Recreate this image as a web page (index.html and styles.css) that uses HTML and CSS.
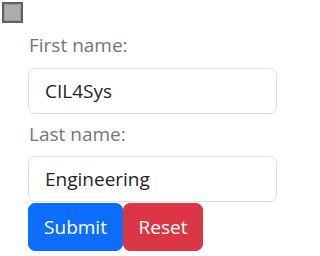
FILE: index.html
```html
<!DOCTYPE html>
<html>
<head>
<meta charset="utf-8">
<link rel="stylesheet" href="styles.css">
</head>
<body>
<div class="page">
  <span class="check" role="checkbox" aria-checked="false" aria-disabled="true"></span>
  <form class="form">
    <label class="label" for="fn">First name:</label>
    <input class="field" id="fn" type="text" value="CIL4Sys">
    <label class="label label-second" for="ln">Last name:</label>
    <input class="field" id="ln" type="text" value="Engineering">
    <div class="actions">
      <button class="btn btn-primary" type="submit">Submit</button>
      <button class="btn btn-danger" type="reset">Reset</button>
    </div>
  </form>
</div>
</body>
</html>
```
FILE: styles.css
```css
* { box-sizing: border-box; }
html, body { margin: 0; padding: 0; background: #fff; }
body {
  font-family: "Open Sans", "Noto Sans", "Liberation Sans", sans-serif;
  color: #212529;
}
.page {
  padding: 2px 3px 0 2px;
  display: flex;
  flex-direction: column;
}
.check {
  display: block;
  width: 21px;
  height: 21px;
  background: #adadad;
  border: 2px solid #616161;
  box-shadow: inset 0 0 0 1px #9a9a9a;
}
.form {
  margin: 7px 0 0 26px;
  display: flex;
  flex-direction: column;
}
.label {
  font-size: 19px;
  line-height: 30px;
  color: #767676;
  padding-left: 1px;
  margin-bottom: 8px;
}
.label-second {
  margin-top: 5px;
  margin-bottom: 7px;
}
.field {
  display: block;
  width: 249px;
  height: 46px;
  margin: 0;
  padding: 0 16px;
  font-family: inherit;
  font-size: 19px;
  color: #212529;
  background: #fff;
  border: 1px solid #dee2e6;
  border-radius: 7px;
  outline: none;
}
.actions {
  display: flex;
  gap: 0;
  margin-top: 1px;
}
.btn {
  height: 48px;
  margin: 0;
  padding: 0;
  text-align: center;
  font-family: inherit;
  font-size: 19px;
  color: #fff;
  border: 1px solid transparent;
  border-radius: 7px;
}
.btn-primary { width: 95px; background: #0d6efd; border-color: #0d6efd; }
.btn-danger { width: 80px; background: #dc3545; border-color: #dc3545; }
```
